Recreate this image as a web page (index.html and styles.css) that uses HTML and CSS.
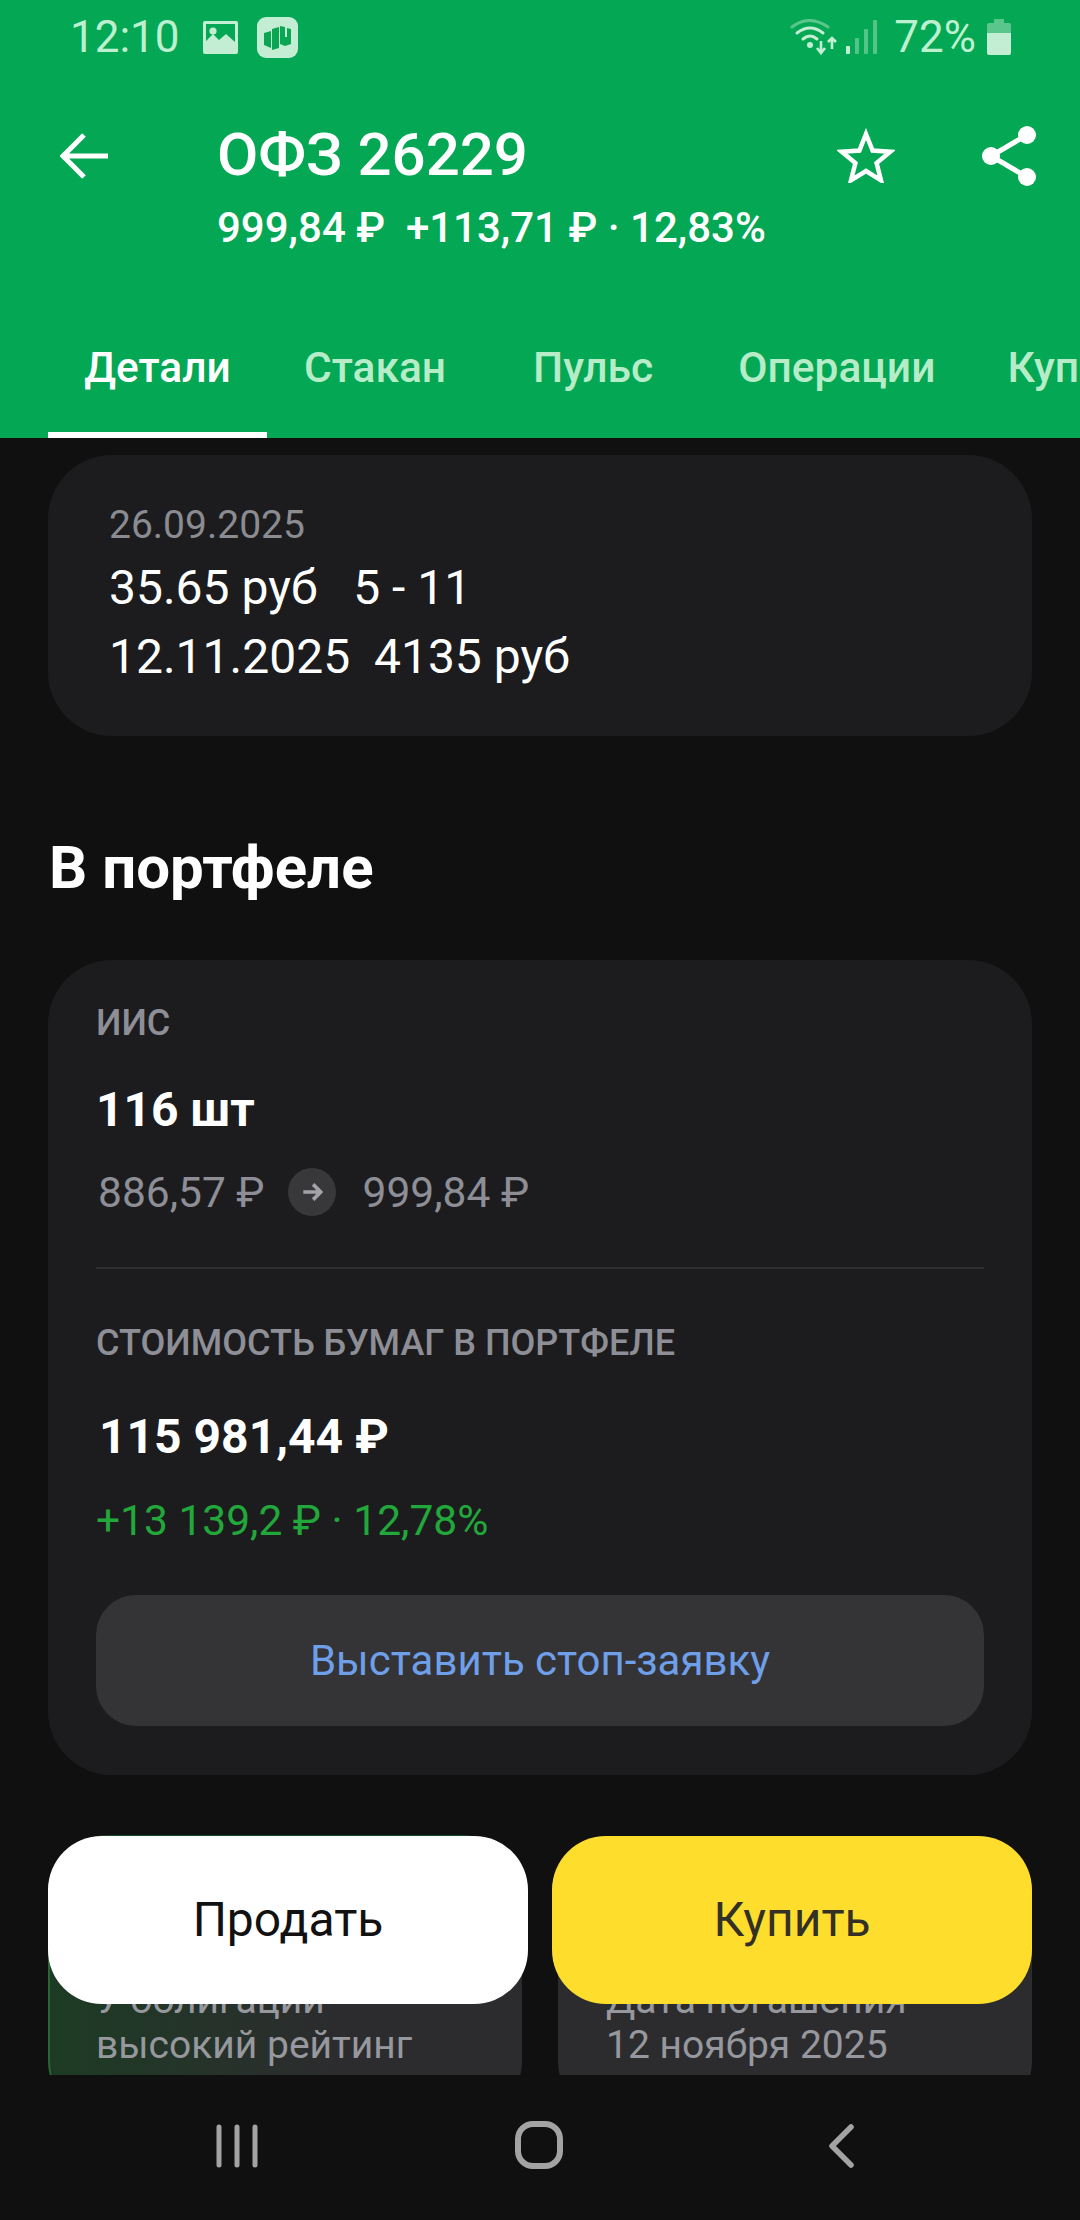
FILE: index.html
```html
<!DOCTYPE html>
<html lang="ru">
<head>
<meta charset="utf-8">
<title>ОФЗ 26229</title>
<link rel="stylesheet" href="styles.css">
</head>
<body>
<div class="app">
  <header class="head">
    <div class="status">
      <span class="status-time">12:10</span>
      <svg class="ic-gallery" viewBox="0 0 35 33"><path fill="#c4eed3" fill-rule="evenodd" d="M2 0h31a2 2 0 0 1 2 2v29a2 2 0 0 1-2 2H2a2 2 0 0 1-2-2V2a2 2 0 0 1 2-2zM3 3v17l7-7 6 6 7-6 9 8V3z"/><circle cx="10" cy="10" r="3.6" fill="#c4eed3"/></svg>
      <svg class="ic-app" viewBox="0 0 41 41"><rect width="41" height="41" rx="9" fill="#c4eed3"/><path fill="#0ba653" d="M7 16l7-2v17l-7-3zM15 12l7-2v21l-7 2zM23 9l5 1v10h2v-9l4 1v15l-6 2-5-2z"/></svg>
      <span class="status-gap"></span>
      <svg class="ic-wifi" viewBox="0 0 48 36"><g fill="none" stroke="#c4eed3" stroke-width="3" stroke-linecap="round"><path opacity=".45" d="M2 8Q19-5 38 8"/><path d="M7 14Q20 4 33 14"/><path d="M13 20Q20 14 27 20"/></g><circle cx="20" cy="26" r="3" fill="#c4eed3"/><path fill="none" stroke="#c4eed3" stroke-width="2.6" d="M31 22v12M27 29l4 5 4-5M42 30V19M38 23l4-4 4 4"/></svg>
      <svg class="ic-signal" viewBox="0 0 32 34"><rect x="0" y="26" width="4" height="8" rx="1" fill="#c4eed3"/><g fill="#c4eed3" opacity=".42"><rect x="9" y="18" width="4" height="16" rx="1"/><rect x="18" y="9" width="4" height="25" rx="1"/><rect x="27" y="0" width="4" height="34" rx="1"/></g></svg>
      <span class="status-pct">72%</span>
      <svg class="ic-battery" viewBox="0 0 24 36"><path fill="#c4eed3" opacity=".45" d="M7 0h10v4h5a2 2 0 0 1 2 2v8H0V6a2 2 0 0 1 2-2h5z"/><path fill="#c4eed3" d="M0 14h24v20a2 2 0 0 1-2 2H2a2 2 0 0 1-2-2z"/></svg>
    </div>
    <div class="toolbar">
      <svg class="ic-back" viewBox="0 0 48 46"><path fill="none" stroke="#fff" stroke-width="5" d="M24 2L3 23l21 21M3 23h45"/></svg>
      <div class="titles">
        <div class="title">ОФЗ 26229</div>
        <div class="subtitle">999,84 ₽&nbsp;&nbsp;+113,71 ₽ · 12,83%</div>
      </div>
      <svg class="ic-star" viewBox="0 0 58 55"><path fill="none" stroke="#fff" stroke-width="4.5" d="M29 6l6.6 16.6 17.6 1.2-13.6 11.3 4.4 17.2L29 43l-15 9.3 4.4-17.2L4.800 23.800l17.600-1.200z"/></svg>
      <svg class="ic-share" viewBox="0 0 54 60"><g fill="#fff"><circle cx="9" cy="30" r="9"/><circle cx="45" cy="9" r="9"/><circle cx="45" cy="51" r="9"/></g><path fill="none" stroke="#fff" stroke-width="5" d="M45 9L9 30l36 21"/></svg>
    </div>
    <nav class="tabs">
      <span class="tab tab-active">Детали</span>
      <span class="tab tab-book">Стакан</span>
      <span class="tab tab-pulse">Пульс</span>
      <span class="tab tab-ops">Операции</span>
      <span class="tab">Купоны</span>
    </nav>
  </header>

  <main class="content">
    <section class="card note">
      <div class="note-date">26.09.2025</div>
      <div class="note-line">35.65 руб &nbsp; 5 - 11</div>
      <div class="note-line">12.11.2025 &nbsp;4135 руб</div>
    </section>

    <h2 class="section-title">В портфеле</h2>

    <section class="card holding">
      <div class="label">ИИС</div>
      <div class="qty">116 шт</div>
      <div class="price-row">
        <span>886,57 ₽</span>
        <span class="arrow"><svg viewBox="0 0 24 24"><path fill="none" stroke="#a2a3a8" stroke-width="3.4" d="M13 5l7 7-7 7M20 12H4"/></svg></span>
        <span>999,84 ₽</span>
      </div>
      <div class="divider"></div>
      <div class="label label-value">СТОИМОСТЬ БУМАГ В ПОРТФЕЛЕ</div>
      <div class="total">115 981,44 ₽</div>
      <div class="gain">+13 139,2 ₽ · 12,78%</div>
      <div class="stop-btn">Выставить стоп-заявку</div>
    </section>

    <section class="facts">
      <div class="fact fact-green">У облигации<br>высокий рейтинг</div>
      <div class="fact">Дата погашения<br>12 ноября 2025</div>
    </section>

    <div class="actions">
      <div class="action action-sell">Продать</div>
      <div class="action action-buy">Купить</div>
    </div>
  </main>

  <footer class="sysnav">
    <svg class="ic-recents" viewBox="0 0 42 44"><path stroke="#a3a3a3" stroke-width="5" stroke-linecap="round" d="M3 3v38M21 3v38M39 3v38"/></svg>
    <svg class="ic-home" viewBox="0 0 48 48"><rect x="3" y="3" width="42" height="42" rx="15" fill="none" stroke="#a3a3a3" stroke-width="6"/></svg>
    <svg class="ic-chevron" viewBox="0 0 27 44"><path fill="none" stroke="#a3a3a3" stroke-width="5.500" stroke-linecap="round" stroke-linejoin="round" d="M23 3L4 22l19 19"/></svg>
  </footer>
</div>
</body>
</html>
```

FILE: styles.css
```css
* { box-sizing: border-box; }

html, body { margin: 0; padding: 0; }

body {
  width: 1080px;
  height: 2220px;
  overflow: hidden;
  background: #101010;
  font-family: Roboto, "Noto Sans", sans-serif;
  color: #fff;
}

.app {
  display: flex;
  flex-direction: column;
  width: 1080px;
  height: 2220px;
}

/* Green header */
.head {
  flex: none;
  height: 438px;
  background: #04a753;
  display: flex;
  flex-direction: column;
}

.status {
  display: flex;
  align-items: center;
  height: 74px;
  padding: 0 69px 0 70px;
  color: #bdf0cf;
  font-size: 44px;
}

.status-time { width: 133px; }
.status-gap { flex: 1; }
.status-pct { margin: 0 11px 0 16px; }

.ic-gallery { width: 35px; height: 33px; margin-right: 19px; }
.ic-app { width: 41px; height: 41px; }
.ic-wifi { width: 48px; height: 36px; }
.ic-signal { width: 32px; height: 34px; margin-left: 8px; }
.ic-battery { width: 24px; height: 36px; }

.toolbar {
  display: flex;
  align-items: flex-start;
  padding-left: 60px;
  height: 218px;
}

.ic-back { width: 48px; height: 46px; margin-top: 59px; margin-right: 109px; flex: none; }

.titles { flex: 1; padding-top: 47px; }

.title {
  font-size: 60px;
  font-weight: 500;
  line-height: 68px;
}

.subtitle {
  font-size: 42px;
  font-weight: 500;
  line-height: 50px;
  margin-top: 14px;
  white-space: nowrap;
}

.ic-star { width: 58px; height: 55px; margin-top: 54px; margin-right: 87px; flex: none; }
.ic-share { width: 54px; height: 60px; margin-top: 52px; margin-right: 44px; flex: none; }

.tabs {
  display: flex;
  height: 146px;
  overflow: hidden;
  padding-left: 48px;
  font-size: 42.500px;
  font-weight: 500;
  color: #b7ecc9;
}

.tab {
  flex: none;
  line-height: 152px;
}

.tab-active {
  color: #fff;
  width: 219px;
  text-align: center;
  margin-right: 37px;
  height: 146px;
  border-bottom: 6px solid #fff;
}

.tab-book { margin-right: 87px; }
.tab-pulse { margin-right: 85px; }
.tab-ops { margin-right: 72px; }

/* Scrolling area */
.content {
  position: relative;
  flex: none;
  height: 1637px;
  overflow: hidden;
  padding: 17px 48px 0;
}

.card {
  background: #1c1c1e;
  border-radius: 64px;
}

.note {
  height: 281px;
  padding: 48px 0 0 61px;
}

.note-date {
  font-size: 39px;
  line-height: 44px;
  color: #8b8c92;
  margin-bottom: 6px;
}

.note-line {
  font-size: 48px;
  line-height: 69px;
}

.section-title {
  margin: 96px 0 56px 1px;
  font-size: 60px;
  font-weight: 700;
  line-height: 72px;
}

.holding {
  padding: 40px 48px 49px;
}

.label {
  font-size: 36px;
  font-weight: 500;
  line-height: 46px;
  color: #8e8f96;
}

.qty {
  margin-top: 36px;
  font-size: 48px;
  font-weight: 700;
  line-height: 56px;
}

.price-row {
  display: flex;
  align-items: center;
  height: 48px;
  margin-top: 30px;
  padding-left: 2px;
  font-size: 42.500px;
  color: #8e8f96;
}

.arrow {
  display: flex;
  align-items: center;
  justify-content: center;
  width: 48px;
  height: 48px;
  margin: 0 27px 0 23px;
  border-radius: 50%;
  background: #38383a;
}

.arrow svg { width: 26px; height: 26px; }

.divider {
  height: 2px;
  margin-top: 51px;
  background: #2f2f31;
}

.label-value { margin-top: 51px; }

.total {
  margin-top: 43px;
  padding-left: 3px;
  font-size: 48px;
  font-weight: 700;
  line-height: 56px;
}

.gain {
  margin-top: 32px;
  font-size: 42.500px;
  line-height: 48px;
  color: #22a83a;
}

.stop-btn {
  margin-top: 50px;
  height: 131px;
  border-radius: 40px;
  background: #343436;
  text-align: center;
  font-size: 42px;
  line-height: 131px;
  color: #6f9fe9;
}

.facts {
  display: grid;
  grid-template-columns: 1fr 1fr;
  gap: 36px;
  margin-top: 61px;
}

.fact {
  height: 285px;
  padding: 142px 0 0 48px;
  border-radius: 60px;
  background: #2c2c2e;
  font-size: 39px;
  line-height: 45px;
  color: #97989d;
  white-space: nowrap;
}

.fact-green {
  margin-top: -1px;
  height: 286px;
  border-left: 2px solid #2a6536;
  border-top: 1px solid #1d4a2b;
  padding-left: 46px;
  background: linear-gradient(90deg, #1d3b24 0, #2c2c2e 60%);
}

/* Floating trade buttons */
.actions {
  position: absolute;
  left: 48px;
  right: 48px;
  bottom: 71px;
  display: grid;
  grid-template-columns: 1fr 1fr;
  gap: 24px;
}

.action {
  height: 168px;
  border-radius: 54px;
  text-align: center;
  font-size: 48px;
  line-height: 168px;
  color: #111;
}

.action-sell { background: #fff; }
.action-buy { background: #ffdd2d; color: #333126; }

/* System navigation */
.sysnav {
  flex: 1;
  display: flex;
  align-items: flex-start;
  padding: 46px 0 0 216px;
}

.ic-recents { width: 42px; height: 44px; margin-top: 3px; }
.ic-home { width: 48px; height: 48px; margin-left: 257px; }
.ic-chevron { width: 27px; height: 44px; margin-left: 265px; margin-top: 3px; }
```
